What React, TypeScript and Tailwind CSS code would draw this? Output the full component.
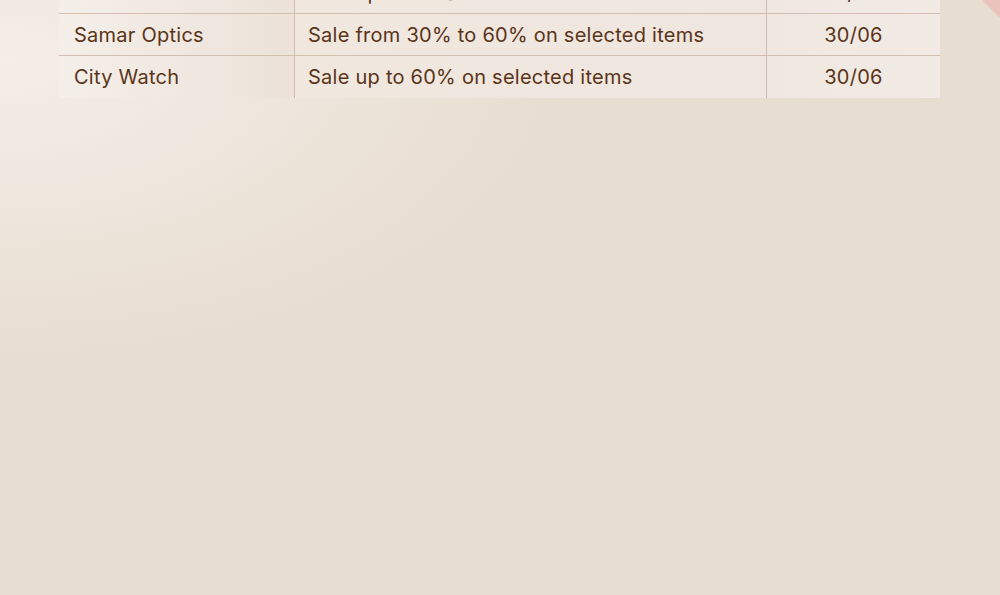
const rows = [
  { store: "Swiss Watch", offer: "Sale up to 50% on selected items", until: "15/06" },
  { store: "Samar Optics", offer: "Sale from 30% to 60% on selected items", until: "30/06" },
  { store: "City Watch", offer: "Sale up to 60% on selected items", until: "30/06" },
];

const App = () => {
  return (
    <div className="relative h-[595px] w-[1000px] overflow-hidden bg-[#e8ddd1] font-['Inter',sans-serif]">
      {/* soft background washes */}
      <div className="pointer-events-none absolute inset-0 bg-[radial-gradient(ellipse_at_0%_10%,#f4eee8_0%,rgba(244,238,232,0)_40%)]" />
      <div className="pointer-events-none absolute -right-[14px] -top-[14px] h-[27px] w-[27px] rotate-45 rounded-[4px] bg-[#ecc4be]" />

      <div className="relative -mt-[28px] px-[59px]">
        <div className="w-[881px]">
          {rows.map((row, i) => (
            <div
              key={row.store}
              className={`grid h-[42px] grid-cols-[236px_472px_173px] text-[20px] tracking-[0.25px] text-[#5a3418] ${
                i < rows.length - 1 ? "border-b border-[#d3bfb0]" : ""
              }`}
            >
              <div className="flex items-center border-r border-[#d2beb0] bg-gradient-to-r from-[#f4efe9] to-[#ece2d9] pl-[15px]">
                {row.store}
              </div>
              <div className="flex items-center border-r border-[#d2beb0] bg-gradient-to-r from-[#f0e7df] to-[#efe6df] pl-[13px]">
                {row.offer}
              </div>
              <div className="flex items-center justify-center bg-gradient-to-r from-[#efe7e0] to-[#f2ebe5]">
                {row.until}
              </div>
            </div>
          ))}
        </div>
      </div>
    </div>
  );
};

export default App;
